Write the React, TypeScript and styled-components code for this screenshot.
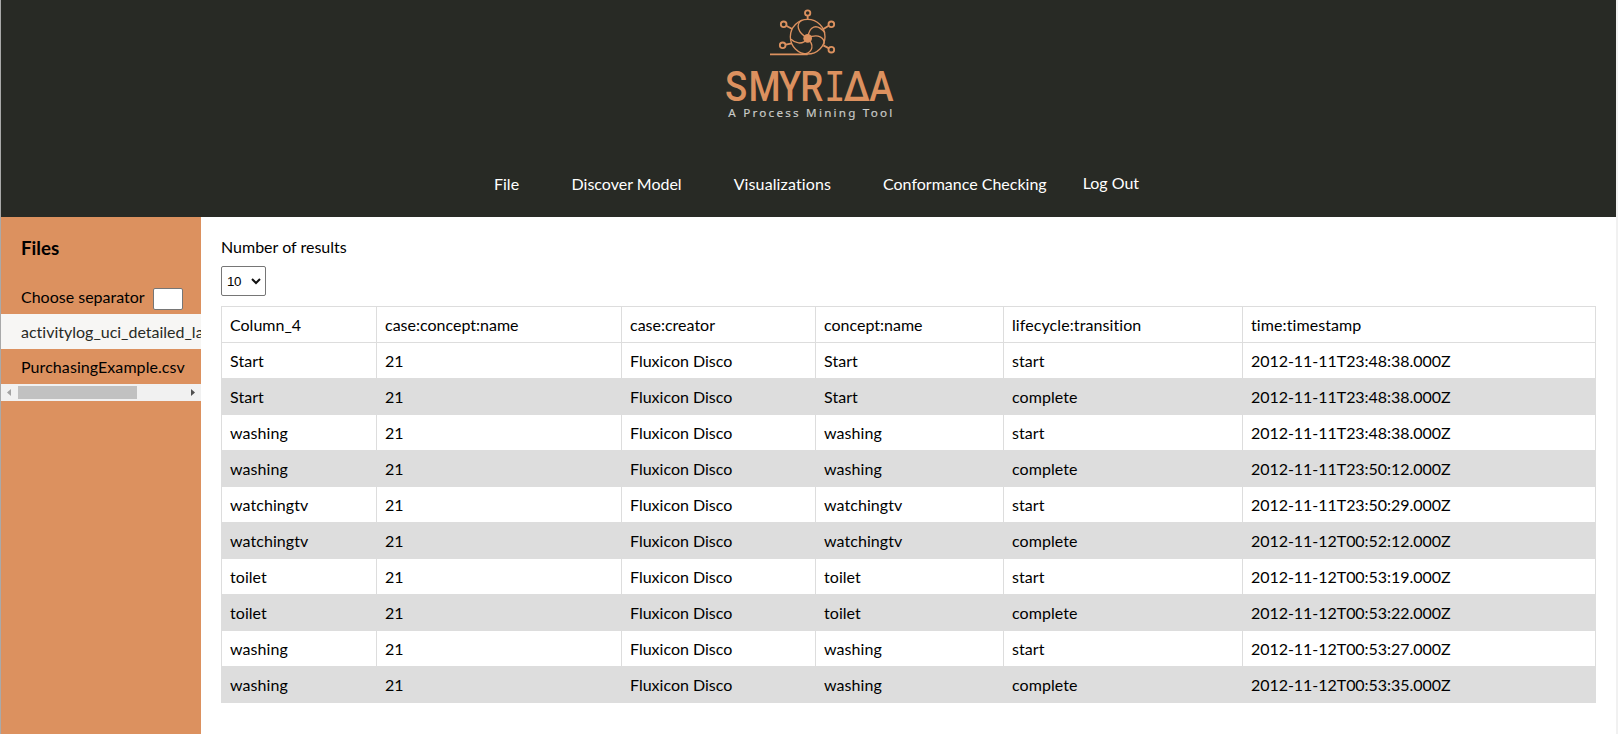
import React from "react";
import styled, { createGlobalStyle } from "styled-components";

const GlobalStyle = createGlobalStyle`
  * { box-sizing: border-box; }
  body {
    margin: 0;
    background: #fff;
    color: #000;
    font: 16px/24px Lato, "Liberation Sans", sans-serif;
    font-variant-ligatures: none;
    overflow: hidden;
  }
`;

const Page = styled.div`
  height: 734px;
  display: flex;
  flex-direction: column;
  border-left: 1px solid #a9a9a9;
  border-right: 2px solid #f1f1f1;
`;

const Header = styled.header`
  height: 217px;
  flex: none;
  background: #282a25;
  display: flex;
  flex-direction: column;
`;

const Logo = styled.svg`
  display: block;
  width: 190px;
  height: 130px;
  margin-left: 714px;
`;

const Nav = styled.nav`
  display: flex;
  align-items: flex-start;
  padding: 42px 0 0 493px;
`;

const NavItem = styled.a<{ $gap?: number; $raised?: boolean; $tracking?: number }>`
  color: #fff;
  white-space: nowrap;
  letter-spacing: ${(p) => p.$tracking ?? 0}px;
  margin-right: ${(p) => p.$gap ?? 52}px;
  margin-top: ${(p) => (p.$raised ? -1 : 0)}px;
`;

const Body = styled.div`
  flex: 1;
  display: flex;
  min-height: 0;
`;

const Sidebar = styled.aside`
  width: 200px;
  flex: none;
  background: #dc915f;
`;

const SidebarTitle = styled.h3`
  margin: 0;
  padding: 19px 20px 0;
  height: 68px;
  font-size: 18.72px;
  font-weight: 700;
`;

const Separator = styled.label`
  height: 29px;
  display: flex;
  align-items: flex-start;
  padding-left: 20px;
  white-space: nowrap;
`;

const SeparatorInput = styled.input`
  width: 30px;
  height: 22px;
  margin: 3px 0 0 8px;
  padding: 0;
  border: 1px solid #767676;
  border-radius: 2px;
  background: #fff;
`;

const FileRow = styled.div<{ $active?: boolean }>`
  height: 35px;
  padding: 6px 0 0 20px;
  overflow: hidden;
  white-space: nowrap;
  letter-spacing: ${(p) => (p.$active ? 0 : 0.07)}px;
  color: ${(p) => (p.$active ? "#282a25" : "#000")};
  background: ${(p) => (p.$active ? "#f7f6f4" : "transparent")};
`;

const ScrollTrack = styled.div`
  height: 17px;
  display: flex;
  align-items: center;
  background: #f1f1f1;
`;

const ScrollArrow = styled.svg`
  width: 17px;
  height: 17px;
  flex: none;
`;

const ScrollLane = styled.div`
  flex: 1;
`;

const ScrollThumb = styled.div`
  width: 119px;
  height: 13px;
  background: #c1c1c1;
`;

const Main = styled.main`
  flex: 1;
  padding: 18px 20px 0;
`;

const Label = styled.div`
  height: 31px;
`;

const Select = styled.button`
  width: 45px;
  height: 30px;
  display: flex;
  align-items: center;
  justify-content: space-between;
  margin: 0 0 10px;
  padding: 0 4px 0 5px;
  border: 1px solid #767676;
  border-radius: 2px;
  background: #fff;
  color: #000;
  font: 13.33px "Liberation Sans", sans-serif;
  letter-spacing: -0.5px;
`;

const Table = styled.table`
  width: 1375px;
  table-layout: fixed;
  border-collapse: collapse;
`;

const Col = styled.col<{ $w: number }>`
  width: ${(p) => p.$w}px;
`;

const Row = styled.tr`
  height: 36px;
  &:nth-child(even of .data) { background: #ddd; }
`;

const Cell = styled.td<{ $tracking?: number }>`
  border: 1px solid #ddd;
  padding: 0 8px;
  height: 36px;
  line-height: 24px;
  letter-spacing: ${(p) => p.$tracking ?? 0}px;
  white-space: nowrap;
`;

const widths = [155, 245, 194, 188, 239, 353];
const columns = ["Column_4", "case:concept:name", "case:creator", "concept:name", "lifecycle:transition", "time:timestamp"];
const events: [string, string, string][] = [
  ["Start", "start", "2012-11-11T23:48:38.000Z"],
  ["Start", "complete", "2012-11-11T23:48:38.000Z"],
  ["washing", "start", "2012-11-11T23:48:38.000Z"],
  ["washing", "complete", "2012-11-11T23:50:12.000Z"],
  ["watchingtv", "start", "2012-11-11T23:50:29.000Z"],
  ["watchingtv", "complete", "2012-11-12T00:52:12.000Z"],
  ["toilet", "start", "2012-11-12T00:53:19.000Z"],
  ["toilet", "complete", "2012-11-12T00:53:22.000Z"],
  ["washing", "start", "2012-11-12T00:53:27.000Z"],
  ["washing", "complete", "2012-11-12T00:53:35.000Z"],
];

function SmyridaLogo() {
  return (
    <Logo viewBox="0 0 570 390" aria-label="SMYRIΔA">
      <g fill="none" stroke="#dc915f" strokeWidth="4">
        <circle cx="278" cy="110" r="52" />
        <path d="M165 163H278" strokeWidth="5" />
        <path d="M278 115C282 78 305 68 330 98M278 115C248 98 240 72 262 60M278 115C262 138 238 128 228 118M278 115C298 135 294 155 270 162M278 115C310 98 330 115 327 133" />
        <g strokeWidth="5.500">
          <path d="M278 48V60M215 78L232 87M340 78L324 88M212 134L230 130M342 145L325 136" />
          <circle cx="278" cy="39" r="8" />
          <circle cx="206" cy="73" r="8.500" />
          <circle cx="349" cy="73" r="8.500" />
          <circle cx="203" cy="136" r="8.500" />
          <circle cx="349" cy="149" r="8.500" />
        </g>
      </g>
      <circle cx="278" cy="115" r="13" fill="#dc915f" />
      <text
        transform="translate(0 302) scale(.88 1)"
        x="34 114 217 291 372 438 526"
        y="0"
        fill="#dc915f"
        fontFamily="Roboto, sans-serif"
        fontWeight="500"
        fontSize="125"
      >
        SMYR<tspan fontFamily="'DejaVu Sans Mono', monospace" fontSize="122">I</tspan>ΔA
      </text>
      <text x="40" y="351" fill="#c9cac8" stroke="#c9cac8" strokeWidth=".5" fontFamily="'Noto Sans', sans-serif" fontSize="35" textLength="492">
        A Process Mining Tool
      </text>
    </Logo>
  );
}

export default function App() {
  return (
    <>
      <GlobalStyle />
      <Page>
        <Header>
          <SmyridaLogo />
          <Nav>
            <NavItem $gap={52.5}>File</NavItem>
            <NavItem>Discover Model</NavItem>
            <NavItem $tracking={0.12}>Visualizations</NavItem>
            <NavItem $gap={36}>Conformance Checking</NavItem>
            <NavItem $raised>Log Out</NavItem>
          </Nav>
        </Header>
        <Body>
          <Sidebar>
            <SidebarTitle>Files</SidebarTitle>
            <Separator>
              Choose separator
              <SeparatorInput />
            </Separator>
            <FileRow $active>activitylog_uci_detailed_labour.csv</FileRow>
            <FileRow>PurchasingExample.csv</FileRow>
            <ScrollTrack>
              <ScrollArrow viewBox="0 0 17 17"><path d="M10 5v7L6 8.500z" fill="#a3a3a3" /></ScrollArrow>
              <ScrollLane><ScrollThumb /></ScrollLane>
              <ScrollArrow viewBox="0 0 17 17"><path d="M7 5v7l4-3.500z" fill="#505050" /></ScrollArrow>
            </ScrollTrack>
          </Sidebar>
          <Main>
            <Label>Number of results</Label>
            <Select>
              10
              <svg width="10" height="8" viewBox="0 0 10 8"><path d="M1 2l4 4 4-4" fill="none" stroke="#101010" strokeWidth="2" /></svg>
            </Select>
            <Table>
              <colgroup>{widths.map((w, i) => <Col key={i} $w={w} />)}</colgroup>
              <tbody>
                <Row>{columns.map((c, i) => <Cell key={c} $tracking={i > 3 ? 0.09 : 0}>{c}</Cell>)}</Row>
                {events.map(([name, phase, time], i) => (
                  <Row key={i} className="data">
                    <Cell $tracking={0.06}>{name}</Cell>
                    <Cell>21</Cell>
                    <Cell>Fluxicon Disco</Cell>
                    <Cell $tracking={0.06}>{name}</Cell>
                    <Cell $tracking={0.06}>{phase}</Cell>
                    <Cell $tracking={-0.04}>{time}</Cell>
                  </Row>
                ))}
              </tbody>
            </Table>
          </Main>
        </Body>
      </Page>
    </>
  );
}
